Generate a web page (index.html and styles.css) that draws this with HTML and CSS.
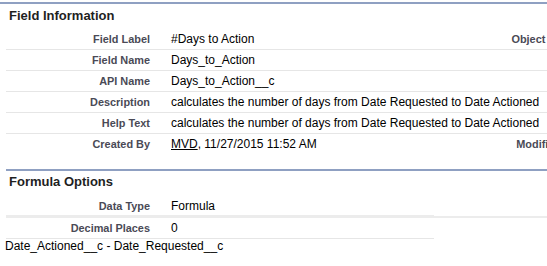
FILE: index.html
```html
<!DOCTYPE html>
<html lang="en">
<head>
<meta charset="utf-8">
<title>Field Information</title>
<link rel="stylesheet" href="styles.css">
</head>
<body>
<div class="page">
  <div class="section section-info">
    <h3 class="title">Field Information</h3>
    <table class="detail">
      <colgroup><col class="c-label"><col class="c-data"><col class="c-label"><col class="c-data"></colgroup>
      <tr><td class="label">Field Label</td><td class="data">#Days to Action</td><td class="label">Object Name</td><td class="data"></td></tr>
      <tr><td class="label">Field Name</td><td class="data">Days_to_Action</td><td class="label"></td><td class="data"></td></tr>
      <tr><td class="label">API Name</td><td class="data">Days_to_Action__c</td><td class="label"></td><td class="data"></td></tr>
      <tr><td class="label">Description</td><td class="data" colspan="3">calculates the number of days from Date Requested to Date Actioned</td></tr>
      <tr><td class="label">Help Text</td><td class="data" colspan="3">calculates the number of days from Date Requested to Date Actioned</td></tr>
      <tr class="last"><td class="label">Created By</td><td class="data"><a class="user" href="#">MVD</a>, 11/27/2015 11:52 AM</td><td class="label">Modified By</td><td class="data"></td></tr>
    </table>
  </div>
  <div class="section section-formula">
    <h3 class="title">Formula Options</h3>
    <table class="detail">
      <colgroup><col class="c-label"><col class="c-data"><col class="c-label"><col class="c-data"></colgroup>
      <tr class="thick"><td class="label lead">Data Type</td><td class="data lead">Formula</td><td class="label"></td><td class="data"></td></tr>
      <tr><td class="label">Decimal Places</td><td class="data">0</td></tr>
    </table>
  </div>
  <div class="formula">Date_Actioned__c - Date_Requested__c</div>
</div>
</body>
</html>
```
FILE: styles.css
```css
html, body {
  margin: 0;
  padding: 0;
  background: #fff;
  overflow: hidden;
}
body {
  width: 547px;
  height: 266px;
  font-family: "Liberation Sans", Arial, sans-serif;
  color: #000;
}
.page {
  padding-top: 2px;
}
.section {
  border-top: 2px solid #8fa0c2;
}
.section-formula {
  margin: 15px 0 0 6px;
}
.title {
  margin: 0;
  font-size: 13px;
  line-height: 16px;
  font-weight: bold;
  color: #1f1f1f;
  padding: 4px 0 5px 9px;
}
.section-formula .title {
  padding: 3px 0 6px 3px;
}
.detail {
  border-collapse: separate;
  border-spacing: 0;
  table-layout: fixed;
  width: 856px;
  margin-left: 6px;
}
.section-formula .detail {
  margin-left: 0;
}
.c-label { width: 154px; }
.c-data { width: 274px; }
.detail td {
  padding: 3px 2px 3px 11px;
  font-size: 12px;
  line-height: 14px;
  border-bottom: 1px solid #e6e6e6;
  vertical-align: baseline;
  white-space: nowrap;
  overflow: visible;
}
.detail td.label {
  padding: 3px 10px 3px 2px;
  text-align: right;
  font-size: 10.9px;
  font-weight: bold;
  color: #4a4a56;
}
.detail tr.last td {
  border-bottom: none;
}
.detail tr.thick td {
  border-bottom: 2px solid #ececec;
}
.detail tr.thick td.lead {
  box-shadow: inset 0 -1px 0 #ececec;
}
.user {
  color: #000;
  text-decoration: underline;
}
.formula {
  padding-left: 5px;
  font-size: 12px;
  line-height: 14px;
}
```
